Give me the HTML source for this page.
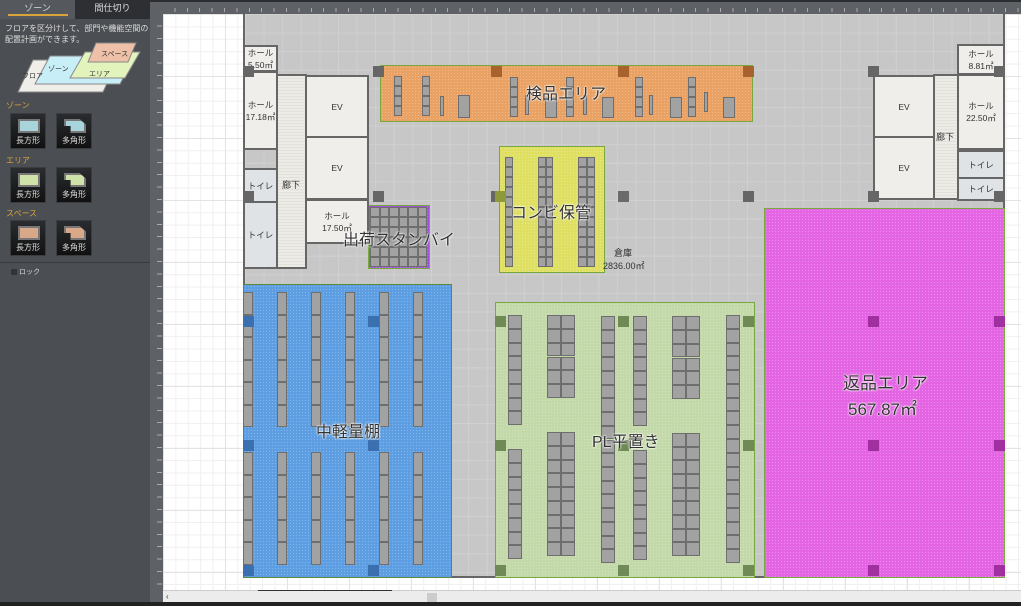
<!DOCTYPE html>
<html><head><meta charset="utf-8">
<style>
*{margin:0;padding:0;box-sizing:border-box}
body{width:1021px;height:606px;overflow:hidden;position:relative;background:#fff;font-family:"Liberation Sans","Noto Sans CJK JP",sans-serif}
.a{position:absolute}
#lp{left:0;top:0;width:150px;height:606px;background:#4b4e53}
.tab{position:absolute;top:0;height:19px;font-size:9px;color:#ddd;text-align:center;line-height:17px}
.ib{position:absolute;width:36px;height:36px;background:linear-gradient(#2a2c2f,#111);border:1px solid #3a3c40}
.ib i{position:absolute;left:7px;top:5px;width:22px;height:14px;border:2px solid #777}
.ib span{position:absolute;left:0;right:0;bottom:2px;font-size:8px;color:#ddd;text-align:center}
.sec{position:absolute;left:6px;font-size:8px;color:#d9a53a}
#canvas{left:163px;top:14px;width:858px;height:577px;background-color:#fff;
background-image:linear-gradient(90deg,#e3e3e3 1px,transparent 1px),linear-gradient(#e3e3e3 1px,transparent 1px),linear-gradient(90deg,#f0f0f0 1px,transparent 1px),linear-gradient(#f0f0f0 1px,transparent 1px);
background-size:62px 62px,62px 62px,12.4px 12.4px,12.4px 12.4px}
#bld{left:243px;top:14px;width:762px;height:564px;background-color:#c7c7c7;border-right:2px solid #666;border-bottom:2px solid #666;border-left:2px solid #666;
background-image:linear-gradient(90deg,#d0d0d0 1px,transparent 1px),linear-gradient(#d0d0d0 1px,transparent 1px);background-size:18.6px 18.6px}
.room{position:absolute;background:#efeeea;border:2px solid #666;font-size:8.5px;color:#333;text-align:center;display:flex;align-items:center;justify-content:center;line-height:12px;white-space:nowrap}
.toi{background:#dfe3e6}
.cor{background:repeating-linear-gradient(#ecebe6 0 2px,#e2e0da 2px 3px)}
.col{position:absolute;width:11px;height:11px;background:#666}
.z{position:absolute;border:1px solid #7aa840}
.r{position:absolute;background:#a2a2a2;border:1px solid #6e6e6e}
.lbl{position:absolute;color:#333;white-space:nowrap;text-shadow:0 0 2px #fff,0 0 2px #fff,0 0 1px #fff}
</style></head><body>
<div id="lp" class="a">
 <div class="tab" style="left:0;width:75px;background:#55585d">ゾーン</div>
 <div class="a" style="left:8px;top:14px;width:60px;height:2px;background:#d9a53a"></div>
 <div class="tab" style="left:75px;width:75px;background:#2d2f33">間仕切り</div>
 <div class="a" style="left:5px;top:23px;font-size:8px;color:#ddd;line-height:11px">フロアを区分けして、部門や機能空間の<br>配置計画ができます。</div>
 <svg class="a" style="left:8px;top:40px" width="135" height="55">
  <polygon points="25,20 110,20 95,52 10,52" fill="#f0eee8" stroke="#888"/>
  <polygon points="42,16 127,16 112,44 27,44" fill="#c8eef8" stroke="#888"/>
  <polygon points="77,12 132,12 117,38 62,38" fill="#e2f4bc" stroke="#888"/>
  <polygon points="88,3 128,3 120,22 80,22" fill="#eec0a8" stroke="#888"/>
  <text x="14" y="38" font-size="7" fill="#333">フロア</text>
  <text x="40" y="31" font-size="7" fill="#333">ゾーン</text>
  <text x="81" y="36" font-size="7" fill="#333">エリア</text>
  <text x="93" y="16" font-size="7" fill="#333">スペース</text>
 </svg>
 <div class="sec" style="top:100px">ゾーン</div>
 <div class="ib" style="left:10px;top:113px"><i style="background:#a8d4dc"></i><span>長方形</span></div>
 <div class="ib" style="left:56px;top:113px"><i style="background:#a8d4dc;clip-path:polygon(0 0,70% 0,100% 40%,100% 100%,30% 100%,30% 50%,0 50%)"></i><span>多角形</span></div>
 <div class="sec" style="top:155px">エリア</div>
 <div class="ib" style="left:10px;top:167px"><i style="background:#cfe2a8"></i><span>長方形</span></div>
 <div class="ib" style="left:56px;top:167px"><i style="background:#cfe2a8;clip-path:polygon(0 0,70% 0,100% 40%,100% 100%,30% 100%,30% 50%,0 50%)"></i><span>多角形</span></div>
 <div class="sec" style="top:208px">スペース</div>
 <div class="ib" style="left:10px;top:220px"><i style="background:#d8a888"></i><span>長方形</span></div>
 <div class="ib" style="left:56px;top:220px"><i style="background:#d8a888;clip-path:polygon(0 0,70% 0,100% 40%,100% 100%,30% 100%,30% 50%,0 50%)"></i><span>多角形</span></div>
 <div class="a" style="left:0;top:262px;width:150px;height:1px;background:#3a3c40"></div>
 <div class="a" style="left:11px;top:269px;width:6px;height:6px;background:#333"></div>
 <div class="a" style="left:19px;top:267px;font-size:7px;color:#ddd">ロック</div>
</div>
<div class="a" style="left:150px;top:0;width:13px;height:606px;background:#5e6166"></div>
<div class="a" style="left:157px;top:14px;width:5px;height:577px;background:repeating-linear-gradient(transparent 0 11.4px,#aaa 11.4px 12.4px)"></div>
<div class="a" style="left:150px;top:0;width:871px;height:14px;background:#5e6166;border-top:2px solid #2c2e31"></div>
<div class="a" style="left:163px;top:8px;width:858px;height:4px;background:repeating-linear-gradient(90deg,transparent 0 11.4px,#aaa 11.4px 12.4px)"></div>
<div id="canvas" class="a"></div>
<div id="bld" class="a"></div>
<div class="a" style="left:163px;top:590px;width:858px;height:12px;background:#ececec;border-top:1px solid #ccc"></div>
<div class="a" style="left:427px;top:593px;width:10px;height:9px;background:#ccc"></div>
<div class="a" style="left:166px;top:592px;font-size:8px;color:#333">‹</div>
<div class="a" style="left:0;top:602px;width:1021px;height:4px;background:#222"></div>
<div class="a" style="left:258px;top:590px;width:134px;height:1px;background:#333"></div>
<div id="plan"></div>
<script>
var h='';
function d(c,x,y,w,ht,s,t){h+='<div class="'+c+'" style="left:'+x+'px;top:'+y+'px;width:'+w+'px;height:'+ht+'px;'+(s||'')+'">'+(t||'')+'</div>';}
var hatch='background-image:radial-gradient(rgba(255,255,255,.25) 0.6px,transparent 0.8px);background-size:3px 3px;';
d('z',380,65,373,57,'background-color:#e9a263;'+hatch);
d('z',499,146,106,127,'background-color:#dfe062;'+hatch);
d('z',368,205,62,64,'background-color:#a24fe0;'+hatch);
d('z',243,284,209,294,'background-color:#5d9ee2;border-color:#5a8a3a;'+hatch);
d('z',495,302,260,276,'background-color:#c4d9a9;'+hatch);
d('z',764,208,241,370,'background-color:#e464e4;'+hatch);
d('room',243,45,35,27,'','ホール<br>5.50㎡');
d('room',243,71,35,79,'','ホール<br>17.18㎡');
d('room cor',276,74,31,195,'','');
d('a',277,175,28,20,'font-size:9px;color:#333;text-align:center;line-height:20px','廊下');
d('room',305,75,64,63,'','EV');
d('room',305,136,64,64,'','EV');
d('room',305,199,64,45,'','ホール<br>17.50㎡');
d('room toi',243,168,35,35,'','トイレ');
d('room toi',243,201,35,68,'','トイレ');
d('room',873,75,62,63,'','EV');
d('room',873,136,62,64,'','EV');
d('room cor',933,74,26,126,'','');
d('a',933,127,24,20,'font-size:9px;color:#333;text-align:center;line-height:20px','廊下');
d('room',957,44,48,31,'','ホール<br>8.81㎡');
d('room',957,74,48,76,'','ホール<br>22.50㎡');
d('room toi',957,150,48,29,'','トイレ');
d('room toi',957,177,48,24,'','トイレ');
for(var i=0;i<6;i++)for(var j=0;j<6;j++)d('r',370+i*9.5,207+j*10,9.5,10);
[[394,76,8,40,4],[422,76,8,40,4],[440,96,4,20,1],[458,95,12,23,1],[510,77,8,40,4],[525,95,4,20,1],[545,97,12,21,1],[566,77,8,40,4],[583,95,4,20,1],[602,97,12,21,1],[635,77,8,40,4],[649,95,4,20,1],[670,97,12,21,1],[688,77,8,40,4],[704,92,4,20,1],[723,97,12,21,1]].forEach(function(a){var n=a[4];for(var k=0;k<n;k++)d('r',a[0],a[1]+k*a[3]/n,a[2],a[3]/n);});
function stack(x,y,w,ht,n,cols){for(var c=0;c<cols;c++)for(var k=0;k<n;k++)d('r',x+c*w/cols,y+k*ht/n,w/cols,ht/n);}
stack(505,157,8,110,11,1);stack(538,157,15,110,11,2);stack(578,157,17,110,11,2);
[243,277,311,345,379,413].forEach(function(x){stack(x,292,10,135,6,1);stack(x,452,10,113,5,1);});
stack(508,315,14,110,8,1);stack(547,315,28,83,6,2);stack(601,316,14,247,18,1);stack(633,316,14,110,8,1);stack(672,316,28,83,6,2);stack(726,315,14,248,18,1);
stack(508,449,14,110,8,1);stack(547,432,28,124,9,2);stack(633,450,14,110,8,1);stack(672,433,28,123,9,2);
[[243,66],[373,66],[491,66],[618,66],[743,66],[868,66],[994,66],[243,191],[373,191],[491,191],[618,191],[743,191],[868,191],[994,191]].forEach(function(p){d('col',p[0],p[1],11,11);});
[316,440,565].forEach(function(y){d('col',243,y,11,11,'background:#3a70b0');d('col',368,y,11,11,'background:#3a70b0');
[495,618,743].forEach(function(x){d('col',x,y,11,11,'background:#6f8a55');});
[868,994].forEach(function(x){d('col',x,y,11,11,'background:#a0309f');});});
d('col',618,191,11,11,'background:#6a6a6a');
d('col',491,66,11,11,'background:#a8622e');d('col',618,66,11,11,'background:#a8622e');d('col',743,66,11,11,'background:#a8622e');
d('col',495,191,11,11,'background:#8e9a3a');
d('lbl',526,80,0,0,'font-size:16px','検品エリア');
d('lbl',511,199,0,0,'font-size:16px','コンビ保管');
d('lbl',343,226,0,0,'font-size:16px','出荷スタンバイ');
d('lbl',614,246,0,0,'font-size:9px;text-shadow:none','倉庫');
d('lbl',603,259,0,0,'font-size:9px;text-shadow:none','2836.00㎡');
d('lbl',316,418,0,0,'font-size:16px','中軽量棚');
d('lbl',592,428,0,0,'font-size:16px','PL平置き');
d('lbl',843,369,0,0,'font-size:17px','返品エリア');
d('lbl',848,395,0,0,'font-size:17px','567.87㎡');
document.getElementById('plan').innerHTML=h.replace(/class="(room|z|r|col|lbl|a)/g,'class="a $1');
</script>
</body></html>
